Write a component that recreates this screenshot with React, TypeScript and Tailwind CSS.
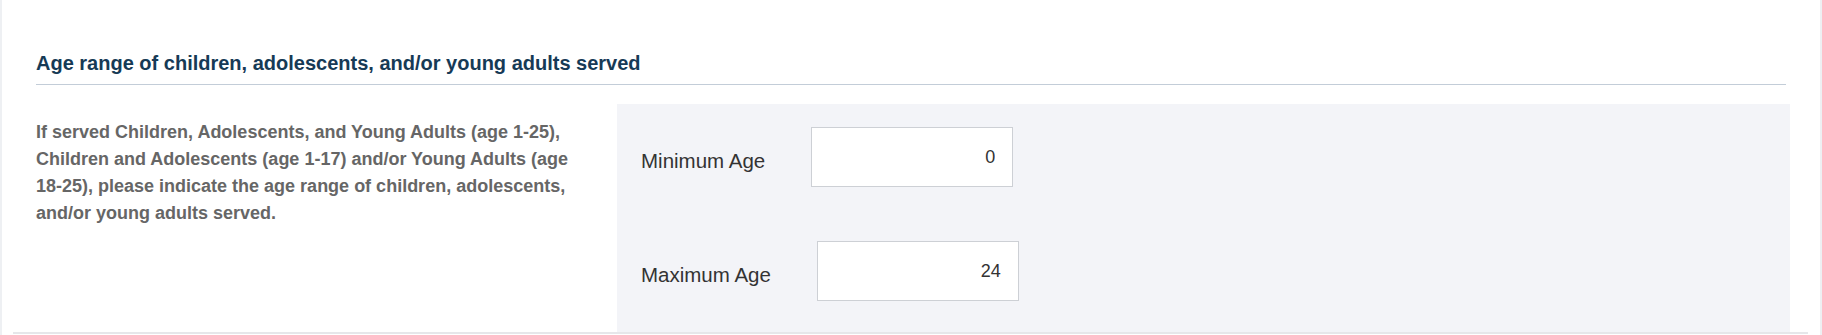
import React from "react";

function AgeField({ label, value }: { label: string; value: string }) {
  return (
    <div className="flex items-center">
      <span className="mt-[7px] text-[20.5px] leading-[24px] text-[#333333]">{label}</span>
      <input
        readOnly
        value={value}
        className="ml-[46px] h-[60px] w-[202px] border border-[#cdd0d5] bg-white pr-[17px] text-right text-[18px] text-[#333333] outline-none"
      />
    </div>
  );
}

export default function App() {
  return (
    <div className="flex min-h-[335px] w-full bg-white font-['Liberation_Sans',Arial,sans-serif]">
      <div className="w-[2px] shrink-0 bg-[#eef0f3]" />
      <div className="flex flex-1 flex-col">
        <div className="mx-[11px] ml-[11px] mr-[12px] border-b-2 border-[#e6e7ea] pl-[23px] pr-[18px] pt-[51px]">
          <h2 className="mr-[4px] border-b border-[#c3cdd8] pb-[9px] text-[20px] font-bold leading-[24px] text-[#163a56]">
            Age range of children, adolescents, and/or young adults served
          </h2>
          <div className="mt-[19px] flex">
            <div className="w-[581px] shrink-0 pr-[24px] pt-[15px]">
              <p className="text-[18px] font-bold leading-[27px] text-[#666666]">
                If served Children, Adolescents, and Young Adults (age 1-25), Children and Adolescents (age 1-17) and/or
                Young Adults (age 18-25), please indicate the age range of children, adolescents, and/or young adults
                served.
              </p>
            </div>
            <div className="flex flex-1 flex-col gap-[54px] bg-[#f3f4f8] pb-[31px] pl-[24px] pt-[23px]">
              <AgeField label="Minimum Age" value="0" />
              <AgeField label="Maximum Age" value="24" />
            </div>
          </div>
        </div>
      </div>
      <div className="w-[2px] shrink-0 bg-[#eef0f3]" />
    </div>
  );
}
